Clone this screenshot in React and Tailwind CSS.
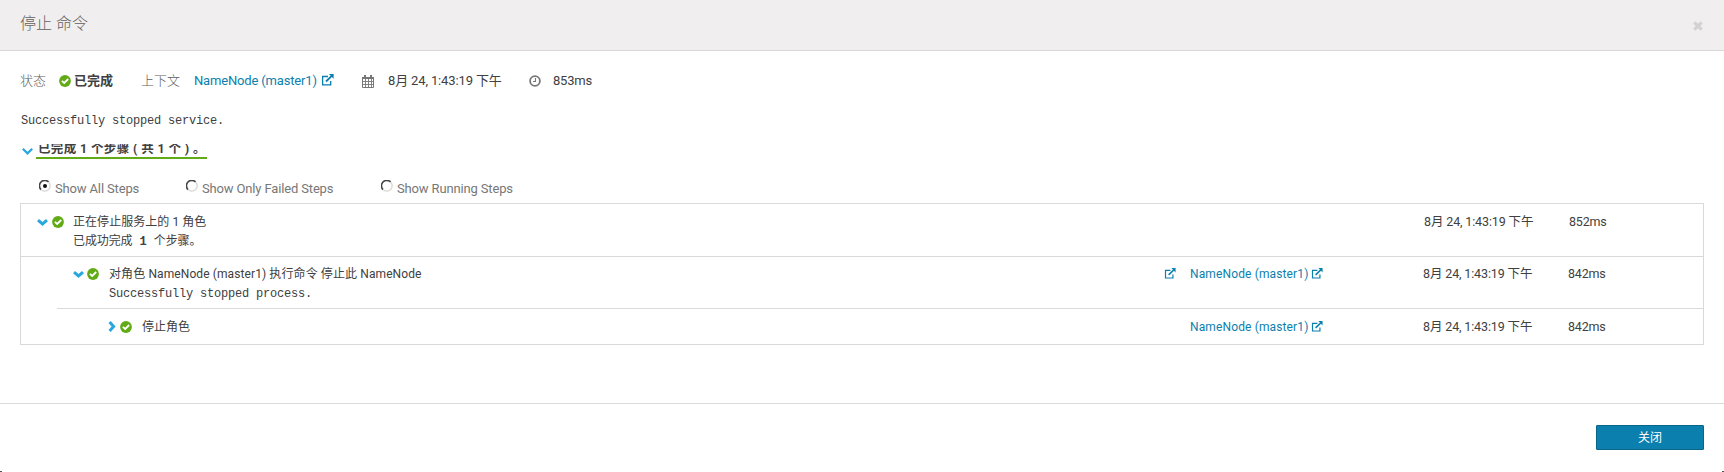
const Check = ({ className = "" }) => (
  <svg viewBox="0 0 12 12" className={"h-3 w-3 shrink-0 " + className}>
    <circle cx="6" cy="6" r="5.9" fill="#62aa16" />
    <path d="M2.9 5.8L5.2 8L9.2 4" fill="none" stroke="#fff" strokeWidth="1.8" />
  </svg>
);

const External = ({ className = "" }) => (
  <svg viewBox="0 0 13 12" className={"shrink-0 " + className}>
    <path d="M7 2.5H1.6V10.9H9.7V7" fill="none" stroke="#0b7fad" strokeWidth="1.3" />
    <path d="M5 7.5L10.8 1.9" fill="none" stroke="#0b7fad" strokeWidth="1.8" />
    <path d="M8 0H12.6V4.8Z" fill="#0b7fad" />
  </svg>
);

const Chevron = ({ right, big, className = "" }) =>
  right ? (
    <svg viewBox="0 0 8 11" className={"h-[11px] w-2 shrink-0 " + className}>
      <path d="M1.6 1L5.6 5.5L1.6 10" fill="none" stroke="#29a7de" strokeWidth="3" />
    </svg>
  ) : (
    <svg viewBox="0 0 11 7" className={"h-[7px] w-[11px] shrink-0 " + className}>
      <path
        d={big ? "M0.8 0.8L5.5 5.4L10.2 0.8" : "M1 1.2L5.5 5L10 1.2"}
        fill="none"
        stroke="#29a7de"
        strokeWidth={big ? "2.2" : "3"}
      />
    </svg>
  );

const Calendar = () => (
  <svg viewBox="0 0 12 13" className="h-[13px] w-3 shrink-0" fill="none" stroke="#777">
    <path d="M0.5 3V12.5H11.5V3" />
    <path d="M0 3H12" strokeWidth="2" />
    <path d="M3 0V3M9 0V3" strokeWidth="2" />
    <path d="M0 6.5H12M0 9.5H12M3.5 4V13M6.5 4V13M9.5 4V13" strokeWidth="0.9" />
  </svg>
);

const Clock = () => (
  <svg viewBox="0 0 12 12" className="h-3 w-3 shrink-0" fill="none" stroke="#777">
    <circle cx="6" cy="6" r="4.9" strokeWidth="1.8" />
    <path d="M6.5 3V6.5H4" strokeWidth="1.1" />
  </svg>
);

const Radio = ({ on }) => (
  <svg viewBox="0 0 12 12" className="h-3 w-3 shrink-0" fill="none">
    <path d="M2 9.6A5 5 0 0 1 9.6 2" stroke="#444" strokeWidth="1.6" />
    <path d="M9.6 2A5 5 0 0 1 2 9.6" stroke="#d8d5ce" strokeWidth="1.3" />
    {on && <circle cx="6" cy="6" r="2" fill="#111" />}
  </svg>
);

const Option = ({ on, label, className = "" }) => (
  <label className={"flex items-start " + className}>
    <Radio on={on} />
    <span className="ml-1 mt-[-1px] text-[13px] leading-5 tracking-[-0.15px] text-[#777]">{label}</span>
  </label>
);

const Link = () => (
  <a className="flex items-center text-[12px] tracking-[0.13px] text-[#0b7fad]">
    NameNode (master1)
    <External className="ml-[3px] mt-[-2px] h-[11px] w-3" />
  </a>
);

const Time = ({ ms, first }) => (
  <div className={first ? "flex w-[280px] leading-[18px]" : "flex w-[281px] leading-[18px]"}>
    <span className="w-[130px] shrink-0 pl-px text-[12.5px] tracking-[-0.13px]">8月 24, 1:43:19 下午</span>
    <span className="ml-[15px] pl-px text-[12.5px] tracking-[-0.2px]">{ms}</span>
  </div>
);

const sans = "font-[Roboto,'Noto_Sans_CJK_SC',sans-serif]";
const mono = "font-['Liberation_Mono','Noto_Sans_CJK_SC',monospace]";

export default function App() {
  return (
    <div className={"relative flex h-[472px] w-[1724px] flex-col overflow-hidden whitespace-nowrap bg-white text-[13px] text-[#404040] " + sans}>
      <header className="flex h-[51px] shrink-0 items-center justify-between border-b border-[#d9d9d9] bg-[#f0eeef] pl-[20px] pr-[21px]">
        <h1 className="mt-[-2px] text-[16px] font-light leading-6 text-[#606060]">停止 命令</h1>
        <svg viewBox="0 0 10 10" className="mt-[2px] h-[10px] w-[10px]">
          <path d="M1.3 1.3L8.7 8.7M8.7 1.3L1.3 8.7" stroke="#d3d2d3" strokeWidth="3.2" />
        </svg>
      </header>

      <main className="flex h-[352px] shrink-0 flex-col px-5">
        <div className="mt-5 flex h-5 items-center">
          <span className="w-[39px] font-light text-[#606060]">状态</span>
          <Check className="mt-[-1px]" />
          <span className="ml-[3px] w-[67px] font-bold">已完成</span>
          <span className="w-[53px] font-light text-[#606060]">上下文</span>
          <a className="flex w-[168px] items-center text-[13px] tracking-[-0.17px] text-[#0b7fad]">
            NameNode (master1)
            <External className="ml-[4px] mt-[-2px] h-3 w-[13px]" />
          </a>
          <Calendar />
          <span className="ml-[14px] w-[141px] text-[13px] tracking-[-0.14px]">8月 24, 1:43:19 下午</span>
          <Clock />
          <span className="ml-3 tracking-[-0.2px]">853ms</span>
        </div>

        <p className={"mt-5 h-5 pl-px text-[12px] leading-5 tracking-[-0.2px] " + mono}>Successfully stopped service.</p>

        <div className="mt-[13px] flex h-[15px] pl-[2px]">
          <Chevron big className="mt-[4px]" />
          <div className="ml-[3px] flex h-[15px] w-[171px] items-center overflow-hidden border-b-2 border-[#62aa16] pl-[2px] text-[12.5px] font-bold">
            <span className="mt-[-4px] leading-[18px] tracking-[0.35px]">已完成 1 个步骤 ( 共 1 个 ) 。</span>
          </div>
        </div>

        <div className="mt-[21px] flex h-[23px] pl-[19px]">
          <Option on label="Show All Steps" className="w-[147px]" />
          <Option label="Show Only Failed Steps" className="w-[195px]" />
          <Option label="Show Running Steps" />
        </div>

        <section className="flex h-[142px] shrink-0 flex-col border border-[#d9d9d9]">
          <div className="flex h-[53px] border-b border-[#d9d9d9] pl-4 pt-[9px]">
            <Chevron className="mt-[6px]" />
            <Check className="ml-1 mt-[3px]" />
            <div className="ml-[9px] flex-1 leading-[18px]">
              <p className="text-[12px] tracking-[0.05px]">正在停止服务上的 1 角色</p>
              <p className={"mt-[2px] text-[12px] tracking-[-0.1px] " + mono}>
                已成功完成 <b>1</b> 个步骤。
              </p>
            </div>
            <Time ms="852ms" first />
          </div>
          <div className="ml-9 flex h-[52px] border-b border-[#d9d9d9] pl-4 pt-[8px]">
            <Chevron className="mt-[6px]" />
            <Check className="ml-[3px] mt-[3px]" />
            <div className="ml-[9px] flex-1 pl-px leading-[18px]">
              <p className="text-[12px] tracking-[0.1px]">对角色 NameNode (master1) 执行命令 停止此 NameNode</p>
              <p className={"mt-[2px] text-[12px] tracking-[-0.2px] " + mono}>Successfully stopped process.</p>
            </div>
            <External className="mr-[14px] mt-[3px] h-[11px] w-3" />
            <div className="flex h-[18px] w-[232px]"><Link /></div>
            <Time ms="842ms" />
          </div>
          <div className="flex h-[35px] pl-[87px] pt-[9px]">
            <Chevron right className="mt-[3px]" />
            <Check className="ml-1 mt-[3px]" />
            <div className="ml-[9px] flex-1 pl-px text-[12px] leading-[18px]">停止角色</div>
            <div className="flex h-[18px] w-[232px]"><Link /></div>
            <Time ms="842ms" />
          </div>
        </section>
      </main>

      <footer className="flex flex-1 items-start justify-end border-t border-[#d9d9d9] pr-5 pt-[21px]">
        <button className="h-[25px] w-[108px] rounded-[1px] border border-[#096688] bg-[#0b7fad] text-[12px] text-white">关闭</button>
      </footer>
      <i className="absolute bottom-0 left-0 h-px w-[2px] bg-[#555]" />
      <i className="absolute bottom-0 right-0 h-px w-[2px] bg-[#555]" />
    </div>
  );
}
